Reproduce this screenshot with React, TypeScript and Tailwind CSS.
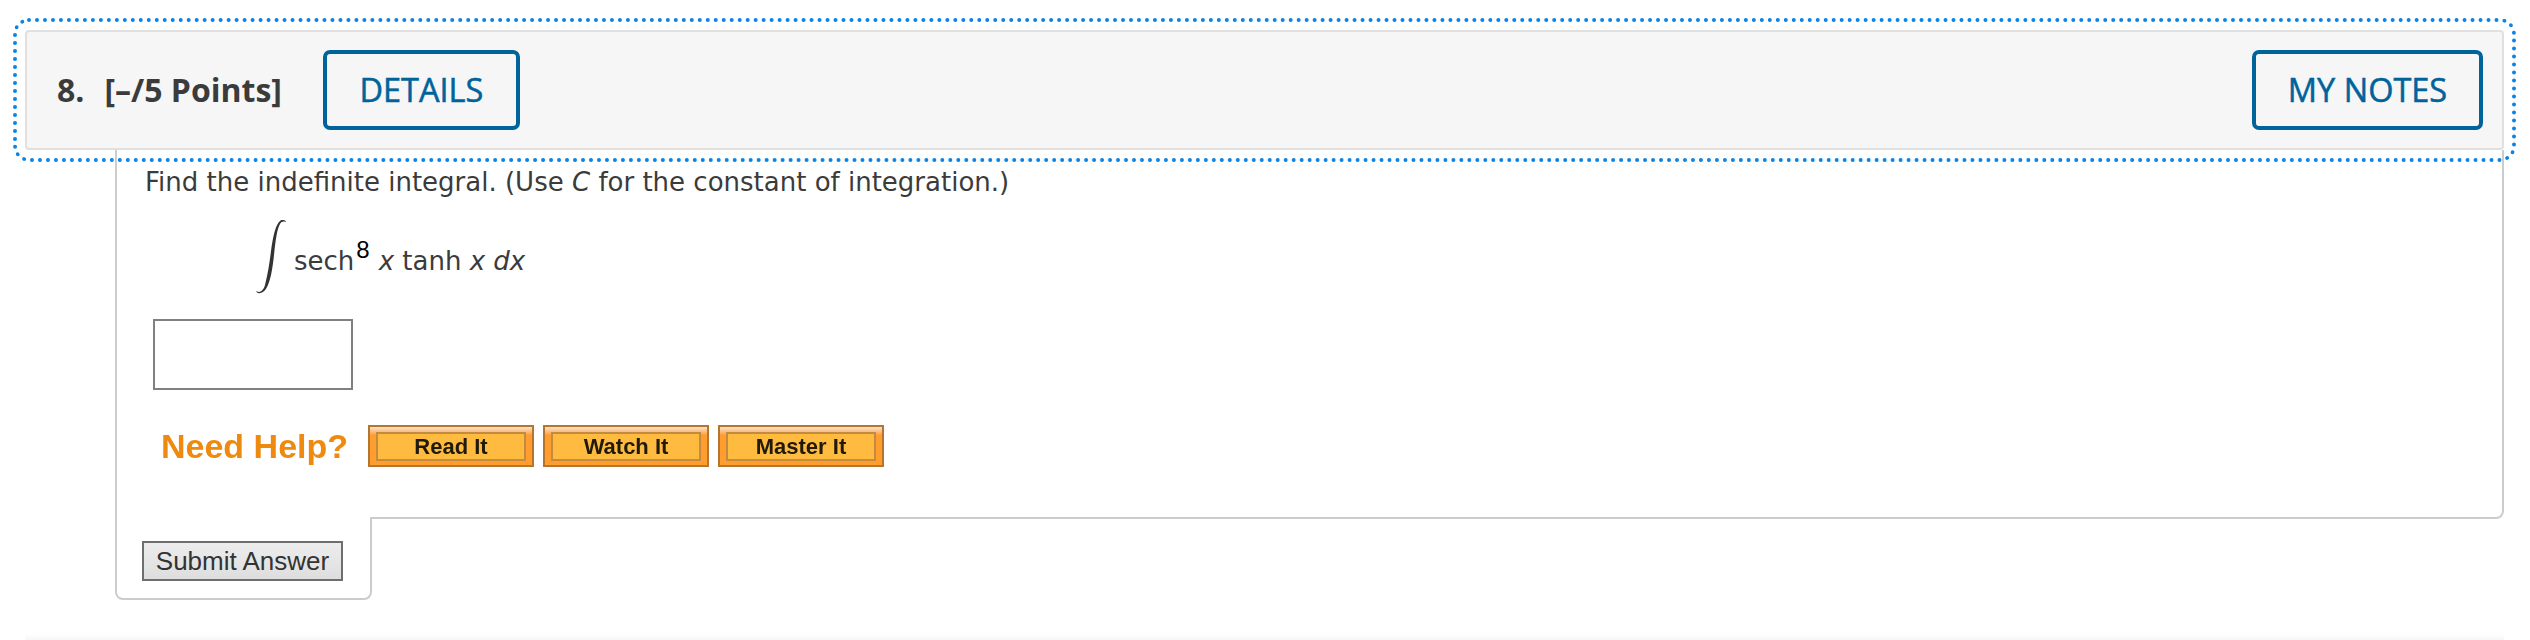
const HelpButton = ({ label }: { label: string }) => {
  return (
    <button className="relative w-[166px] h-[42px] border-2 border-[#b5752f] bg-[#ff9d2e] pt-[5px] pb-[4px] px-[6px] cursor-pointer">
      <span className="absolute left-0 right-0 top-0 h-[8px] bg-gradient-to-b from-[#f6e3cc] to-[#ff9d2e]"></span>
      <span className="relative flex items-center justify-center w-full h-full border-2 border-[#c48a3e] bg-[#ffbb40] text-[22px] font-bold text-[#1f1a0a] font-['Liberation_Sans',sans-serif]">
        <span className="blur-[0.4px]">{label}</span>
      </span>
    </button>
  );
};

const OutlineButton = ({ label, width }: { label: string; width: string }) => {
  return (
    <button className={`${width} h-[80px] border-4 border-[#00639b] rounded-[7px] text-[32.5px] text-[#00639b] [-webkit-text-stroke:0.5px_#00639b] cursor-pointer`}>
      {label}
    </button>
  );
};

export default function App() {
  return (
    <div className="w-[2530px] h-[640px] bg-white overflow-hidden pt-[30px] px-[25px] font-['Open_Sans',sans-serif]">
      {/* question header */}
      <div className="relative z-10 h-[120px] w-[2479px] flex items-center justify-between pl-[30px] pr-[19px] bg-[#f6f6f6] border-2 border-[#e0e0e0] rounded-[4px] outline-[4px] outline-dotted outline-[#0a84e6] outline-offset-[8px]">
        <div className="flex items-center gap-[41px]">
          <div className="flex gap-[20px] text-[32px] font-bold text-[#3b3b3b]">
            <span>8.</span>
            <span>[–/5 Points]</span>
          </div>
          <OutlineButton label="DETAILS" width="w-[197px]" />
        </div>
        <OutlineButton label="MY NOTES" width="w-[231px]" />
      </div>

      {/* question body */}
      <div className="ml-[90px] w-[2389px] h-[369px] border-x-2 border-b-2 border-[#cccccc] rounded-br-[8px] pl-[28px] pt-[13px] font-['DejaVu_Sans',sans-serif] text-[#3b3b3b]">
        <p className="text-[26px] leading-[38px]">
          Find the indefinite integral. (Use <i>C</i> for the constant of integration.)
        </p>
        <div className="flex items-start mt-[18px] ml-[111px] h-[75px]">
          <svg width="32" height="76" viewBox="0 0 32 76" className="shrink-0">
            <path
              d="M0.5 72 C3 74 7 73 9 66 C12 54 13.5 44 15 32 C17 18 19 6 24.5 1.5 C26 0.7 28.5 1 30 2.5 L29.5 3 C27.5 2 25.5 2.5 24 5 C21 10 19.5 22 18 36 C16.5 50 14.5 62 10.5 69 C8 74 3 75.5 0.5 73 Z"
              fill="#333333"
            />
          </svg>
          <div className="ml-[6px] mt-[24px] text-[26px] leading-[36px] whitespace-nowrap">
            sech
            <span className="relative top-[-12px] ml-[2px] mr-[9px] text-[24px] text-black font-['Liberation_Sans',sans-serif]">8</span>
            <i>x</i> tanh <i>x</i> <i>dx</i>
          </div>
        </div>
        <input type="text" className="block mt-[25px] ml-[8px] w-[200px] h-[71px] border-2 border-[#808080] bg-white" />
        <div className="flex items-center mt-[35px] ml-[16px] h-[42px]">
          <span className="w-[207px] text-[34px] font-bold text-[#ee8a0f] font-['Liberation_Sans',sans-serif] blur-[0.4px]">Need Help?</span>
          <div className="flex gap-[9px]">
            <HelpButton label="Read It" />
            <HelpButton label="Watch It" />
            <HelpButton label="Master It" />
          </div>
        </div>
      </div>

      {/* submit tab */}
      <div className="relative -mt-[2px] ml-[90px] w-[257px] h-[83px] bg-white border-x-2 border-b-2 border-[#cccccc] rounded-b-[8px] pt-[24px] pl-[25px]">
        <button className="w-[201px] h-[40px] border-2 border-[#6e6e6e] bg-gradient-to-b from-[#ededed] to-[#dedede] text-[26px] leading-[32px] text-[#333333] font-['Liberation_Sans',sans-serif] cursor-pointer">
          Submit Answer
        </button>
      </div>

      <div className="mt-[34px] w-[2479px] h-[6px] bg-gradient-to-b from-white to-[#f7f7f7]"></div>
    </div>
  );
}
